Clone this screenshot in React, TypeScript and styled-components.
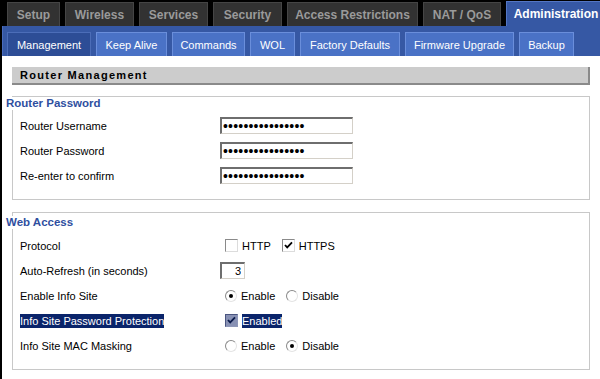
import React from 'react'
import styled, { createGlobalStyle } from 'styled-components'

const GlobalStyle = createGlobalStyle`
    html, body {
        margin: 0;
        padding: 0;
        background: #ffffff;
    }
    body {
        font-family: "Liberation Sans", Arial, sans-serif;
        font-size: 11px;
        color: #000000;
    }
`

const Page = styled.div`
    width: 600px;
    height: 379px;
    overflow: hidden;
    background: #000000;
    display: flex;
    flex-direction: column;
`

const TopTabs = styled.div`
    height: 26px;
    display: flex;
    align-items: flex-end;
    gap: 5px;
    padding-left: 7px;
    box-sizing: border-box;
    white-space: nowrap;
`

const TopTab = styled.div<{ $width: number; $active?: boolean }>`
    flex: none;
    width: ${(p) => p.$width}px;
    height: ${(p) => (p.$active ? 25 : 24)}px;
    box-sizing: border-box;
    display: flex;
    align-items: center;
    justify-content: center;
    padding-top: ${(p) => (p.$active ? 0 : 1)}px;
    font-weight: bold;
    font-size: 12px;
    color: ${(p) => (p.$active ? '#ffffff' : '#9a9a9a')};
    background: ${(p) => (p.$active ? '#3658a4' : '#323232')};
    border: 1px solid ${(p) => (p.$active ? '#5476c4' : '#454545')};
    border-bottom: none;
`

const Main = styled.div`
    flex: 1;
    margin-left: 2px;
    background: #ffffff;
    display: flex;
    flex-direction: column;
`

const SubBar = styled.div`
    height: 30px;
    box-sizing: border-box;
    background: #3658a4;
    border-left: 1px solid #4a6cbc;
    padding-left: 4px;
    display: flex;
    align-items: flex-end;
    gap: 5px;
    white-space: nowrap;
`

const SubTab = styled.div<{ $width: number; $active?: boolean }>`
    flex: none;
    width: ${(p) => p.$width}px;
    height: 24px;
    box-sizing: border-box;
    display: flex;
    align-items: center;
    justify-content: center;
    font-size: 11px;
    color: #ffffff;
    background: ${(p) => (p.$active ? '#2d4d96' : '#4a72c6')};
    border: 1px solid ${(p) => (p.$active ? '#4c6db8' : '#6a8edb')};
    border-bottom: none;
`

const Content = styled.div`
    padding: 11px 10px 0 10px;
    display: flex;
    flex-direction: column;
`

const PageTitle = styled.div`
    height: 18px;
    box-sizing: border-box;
    background: #cccccc;
    border-right: 2px solid #8a8a8a;
    border-bottom: 2px solid #8a8a8a;
    padding-left: 8px;
    display: flex;
    align-items: center;
    font-weight: bold;
    font-size: 11px;
    letter-spacing: 1.3px;
    color: #000000;
`

const Section = styled.div<{ $gap: number }>`
    margin-top: ${(p) => p.$gap}px;
    border: 1px solid #c8c8c8;
    padding: 0 0 11px 7px;
    display: flex;
    flex-direction: column;
`

const Legend = styled.div<{ $offset: number }>`
    margin: ${(p) => p.$offset}px 0 0 -14px;
    height: 13px;
    line-height: 13px;
    align-self: flex-start;
    background: #ffffff;
    padding-right: 2px;
    color: #2f4f9f;
    font-weight: bold;
    font-size: 11.5px;
`

const Rows = styled.div<{ $gap: number }>`
    margin-top: ${(p) => p.$gap}px;
    display: flex;
    flex-direction: column;
`

const Row = styled.div`
    height: 25px;
    display: flex;
    align-items: center;
`

const Label = styled.div`
    width: 200px;
    flex: none;
    display: flex;
    align-items: center;
`

const LabelText = styled.span<{ $selected?: boolean }>`
    line-height: 14px;
    color: ${(p) => (p.$selected ? '#ffffff' : '#000000')};
    background: ${(p) => (p.$selected ? '#0a246a' : 'transparent')};
`

const Field = styled.div`
    display: flex;
    align-items: center;
`

const TextInput = styled.input<{ $width: number }>`
    width: ${(p) => p.$width}px;
    height: 17px;
    box-sizing: border-box;
    margin: 0;
    padding: 0 2px;
    border-style: solid;
    border-width: 2px 1px 1px 2px;
    border-color: #6e6e6e #d4d0c8 #d4d0c8 #6e6e6e;
    background: #ffffff;
    font-family: "Liberation Sans", Arial, sans-serif;
    font-size: 11px;
    color: #000000;
    outline: none;
`

const PasswordInput = styled(TextInput)`
    font-size: 14px;
    letter-spacing: 0.2px;
    padding-left: 1px;
`

const NumberInput = styled(TextInput)`
    text-align: right;
    padding-right: 3px;
`

const Option = styled.label`
    display: inline-flex;
    align-items: center;
    gap: 4px;
    margin-left: 5px;
    margin-right: 6px;
`

const Box = styled.span<{ $selected?: boolean }>`
    width: 13px;
    height: 13px;
    box-sizing: border-box;
    display: inline-flex;
    align-items: center;
    justify-content: center;
    border-style: solid;
    border-width: 1px;
    border-color: ${(p) =>
        p.$selected ? '#4a5580 #8e97b8 #8e97b8 #4a5580' : '#8a8a8a #dcdcdc #dcdcdc #8a8a8a'};
    background: ${(p) => (p.$selected ? '#8891b4' : '#ffffff')};
`

const Radio = styled.span<{ $checked?: boolean }>`
    width: 12px;
    height: 12px;
    box-sizing: border-box;
    border-radius: 50%;
    border: 1px solid;
    border-color: #8a8a8a #e4e4e4 #e4e4e4 #8a8a8a;
    background: #ffffff;
    display: inline-flex;
    align-items: center;
    justify-content: center;
    &::after {
        content: '';
        width: 4px;
        height: 4px;
        border-radius: 50%;
        background: ${(p) => (p.$checked ? '#000000' : 'transparent')};
    }
`

const OptionText = styled.span<{ $selected?: boolean }>`
    line-height: 14px;
    color: ${(p) => (p.$selected ? '#ffffff' : '#000000')};
    background: ${(p) => (p.$selected ? '#0a246a' : 'transparent')};
`

const CheckBox = ({ checked, selected }: { checked?: boolean; selected?: boolean }) => (
    <Box $selected={selected}>
        {checked && (
            <svg width="9" height="9" viewBox="0 0 9 9">
                <path
                    d="M1 4 L3.2 6.4 L8 1.4"
                    fill="none"
                    stroke={selected ? '#0a1a4a' : '#000000'}
                    strokeWidth="1.8"
                />
            </svg>
        )}
    </Box>
)

const topTabs = [
    { label: 'Setup', width: 53 },
    { label: 'Wireless', width: 69 },
    { label: 'Services', width: 69 },
    { label: 'Security', width: 69 },
    { label: 'Access Restrictions', width: 131 },
    { label: 'NAT / QoS', width: 78 },
    { label: 'Administration', width: 100, active: true },
]

const subTabs = [
    { label: 'Management', width: 84, active: true },
    { label: 'Keep Alive', width: 71 },
    { label: 'Commands', width: 73 },
    { label: 'WOL', width: 45 },
    { label: 'Factory Defaults', width: 100 },
    { label: 'Firmware Upgrade', width: 109 },
    { label: 'Backup', width: 55 },
]

const secret = 'abcdefghijklmnop'

export default function App() {
    return (
        <Page>
            <GlobalStyle />
            <TopTabs>
                {topTabs.map((t) => (
                    <TopTab key={t.label} $width={t.width} $active={t.active}>
                        {t.label}
                    </TopTab>
                ))}
            </TopTabs>
            <Main>
                <SubBar>
                    {subTabs.map((t) => (
                        <SubTab key={t.label} $width={t.width} $active={t.active}>
                            {t.label}
                        </SubTab>
                    ))}
                </SubBar>
                <Content>
                    <PageTitle>Router Management</PageTitle>

                    <Section $gap={11}>
                        <Legend $offset={0}>Router Password</Legend>
                        <Rows $gap={3}>
                            <Row>
                                <Label>Router Username</Label>
                                <PasswordInput type="password" $width={133} defaultValue={secret} />
                            </Row>
                            <Row>
                                <Label>Router Password</Label>
                                <PasswordInput type="password" $width={133} defaultValue={secret} />
                            </Row>
                            <Row>
                                <Label>Re-enter to confirm</Label>
                                <PasswordInput type="password" $width={133} defaultValue={secret} />
                            </Row>
                        </Rows>
                    </Section>

                    <Section $gap={12}>
                        <Legend $offset={3}>Web Access</Legend>
                        <Rows $gap={4}>
                            <Row>
                                <Label>Protocol</Label>
                                <Field>
                                    <Option>
                                        <CheckBox />
                                        <OptionText>HTTP</OptionText>
                                    </Option>
                                    <Option>
                                        <CheckBox checked />
                                        <OptionText>HTTPS</OptionText>
                                    </Option>
                                </Field>
                            </Row>
                            <Row>
                                <Label>Auto-Refresh (in seconds)</Label>
                                <NumberInput $width={25} defaultValue="3" />
                            </Row>
                            <Row>
                                <Label>Enable Info Site</Label>
                                <Field>
                                    <Option>
                                        <Radio $checked />
                                        <OptionText>Enable</OptionText>
                                    </Option>
                                    <Option>
                                        <Radio />
                                        <OptionText>Disable</OptionText>
                                    </Option>
                                </Field>
                            </Row>
                            <Row>
                                <Label>
                                    <LabelText $selected>Info Site Password Protection</LabelText>
                                </Label>
                                <Field>
                                    <Option>
                                        <CheckBox checked selected />
                                        <OptionText $selected>Enabled</OptionText>
                                    </Option>
                                </Field>
                            </Row>
                            <Row>
                                <Label>Info Site MAC Masking</Label>
                                <Field>
                                    <Option>
                                        <Radio />
                                        <OptionText>Enable</OptionText>
                                    </Option>
                                    <Option>
                                        <Radio $checked />
                                        <OptionText>Disable</OptionText>
                                    </Option>
                                </Field>
                            </Row>
                        </Rows>
                    </Section>
                </Content>
            </Main>
        </Page>
    )
}
